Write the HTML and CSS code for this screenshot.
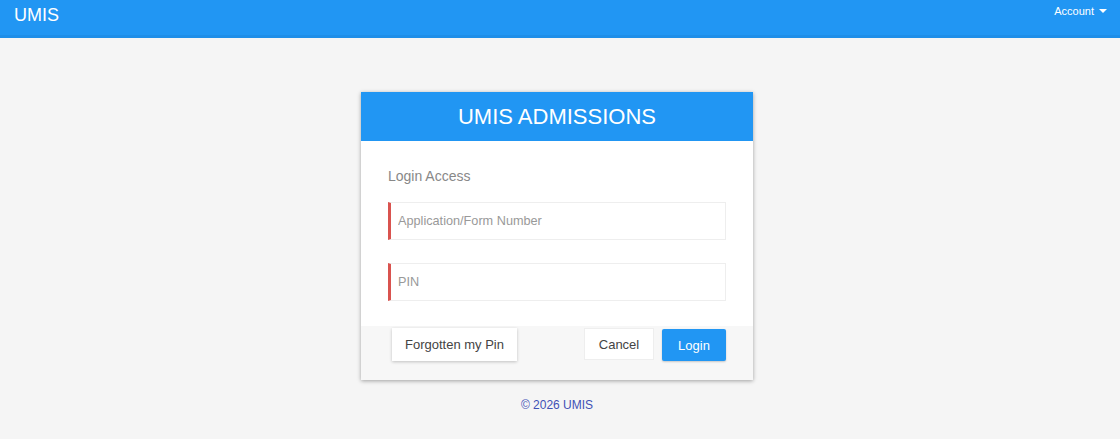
FILE: index.html
```html
<!DOCTYPE html>
<html lang="en">
<head>
  <meta charset="UTF-8" />
  <meta name="viewport" content="width=device-width, initial-scale=1.0"/>
  <title>UMIS Admissions – Login</title>
  <link rel="stylesheet" href="styles.css">
</head>
<body>
  <nav class="navbar">
    <a class="brand" href="#">UMIS</a>
    <a class="account" href="#">Account <span class="caret"></span></a>
  </nav>

  <main class="page">
    <div class="login-card">
      <div class="card-header">UMIS ADMISSIONS</div>

      <div class="card-body">
        <h4>Login Access</h4>
        <input class="field" type="text" placeholder="Application/Form Number" />
        <input class="field" type="password" placeholder="PIN" />
      </div>

      <div class="card-footer">
        <button class="btn btn-raised">Forgotten my Pin</button>
        <div class="actions">
          <button class="btn btn-flat">Cancel</button>
          <button class="btn btn-primary">Login</button>
        </div>
      </div>
    </div>

    <p class="copyright">&copy; 2026 UMIS</p>
  </main>
</body>
</html>
```

FILE: styles.css
```css
body {
  margin: 0;
  padding: 0;
  background: #f5f5f5;
  font-family: 'Liberation Sans', Arial, sans-serif;
}

.navbar {
  height: 35px;
  background: #2196f3;
  border-bottom: 3px solid #1e8ee8;
  display: flex;
  justify-content: space-between;
  align-items: flex-start;
  padding: 0 13px 0 14px;
}

.brand {
  color: white;
  text-decoration: none;
  font-size: 18px;
  line-height: 30px;
}

.account {
  color: white;
  text-decoration: none;
  font-size: 11px;
  line-height: 22px;
}

.caret {
  display: inline-block;
  width: 0;
  height: 0;
  margin-left: 2px;
  vertical-align: 2px;
  border-top: 4px solid white;
  border-left: 4px solid transparent;
  border-right: 4px solid transparent;
}

.page {
  display: flex;
  flex-direction: column;
  align-items: center;
  padding: 54px 6px 0 0;
}

.login-card {
  width: 392px;
  background: white;
  box-shadow: 0 1px 4px rgba(0,0,0,0.35);
}

.card-header {
  background: #2196f3;
  color: white;
  text-align: center;
  font-size: 22px;
  height: 49px;
  line-height: 49px;
}

.card-body {
  padding: 25px 27px 25px;
}

.card-body h4 {
  margin: 0 0 16px;
  font-weight: normal;
  font-size: 14px;
  line-height: 20px;
  color: #888;
}

.field {
  display: block;
  box-sizing: border-box;
  width: 100%;
  height: 38px;
  margin-bottom: 23px;
  padding: 0 7px;
  border: 1px solid #eee;
  border-left: 3px solid #d9534f;
  font-family: inherit;
  font-size: 12.7px;
  color: #333;
  outline: none;
}

.field:last-child {
  margin-bottom: 0;
}

.field::placeholder {
  color: #999;
}

.card-footer {
  background: #f7f7f7;
  display: flex;
  justify-content: space-between;
  align-items: flex-start;
  padding: 2px 27px 19px 31px;
}

.actions {
  display: flex;
  gap: 8px;
}

.btn {
  font-family: inherit;
  font-size: 13px;
  border: none;
  cursor: pointer;
  height: 32px;
  padding: 0;
}

.btn-raised {
  background: white;
  color: #444;
  width: 125px;
  height: 33px;
  box-shadow: 0 1px 3px rgba(0,0,0,0.22);
}

.btn-flat {
  background: white;
  color: #444;
  border: 1px solid #eee;
  width: 70px;
}

.btn-primary {
  background: #2196f3;
  color: white;
  width: 64px;
  margin-top: 1px;
  border-radius: 2px;
  box-shadow: 0 1px 2px rgba(0,0,0,0.2);
}

.copyright {
  margin: 18px 0 0;
  font-size: 12px;
  color: #3f51b5;
}
```
